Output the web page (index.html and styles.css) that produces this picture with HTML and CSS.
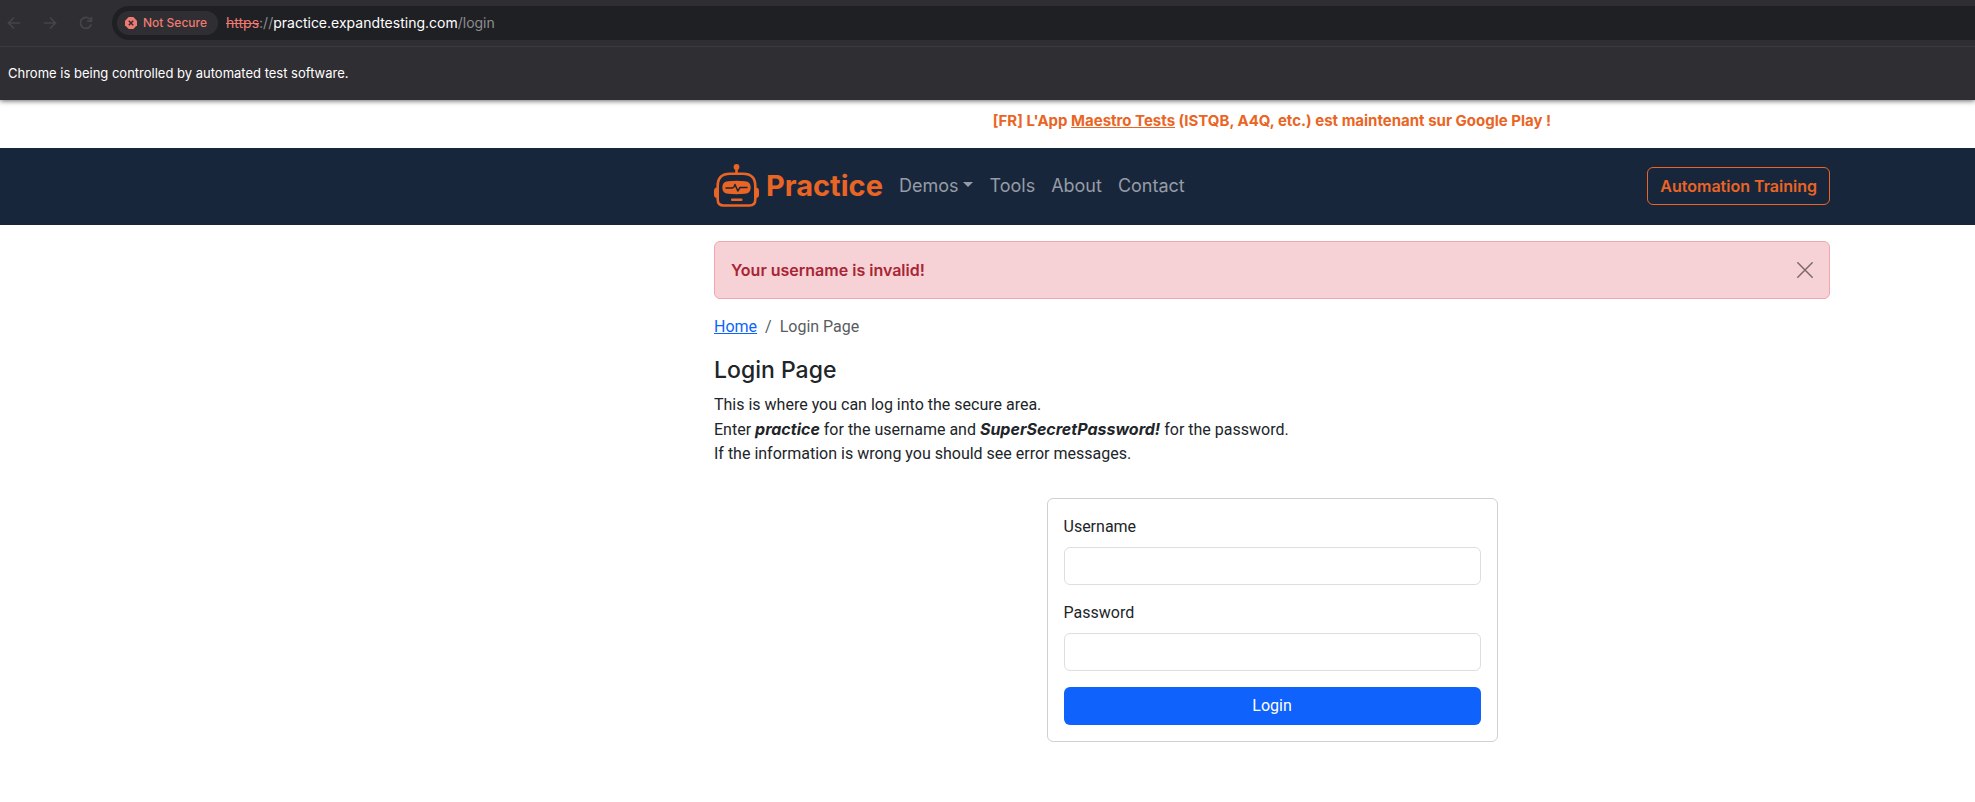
FILE: index.html
```html
<!DOCTYPE html>
<html lang="en">
<head>
<meta charset="utf-8">
<title>Login Page</title>
<link rel="stylesheet" href="styles.css">
</head>
<body>
<div class="browser">
  <div class="toolbar">
    <div class="controls">
      <button class="tool" type="button" aria-label="Back"><svg viewBox="0 0 16 16"><path d="M14 8H2.500M8 2.500 2.500 8 8 13.500"/></svg></button>
      <button class="tool" type="button" aria-label="Forward"><svg viewBox="0 0 16 16"><path d="M2 8h11.500M8 2.500 13.500 8 8 13.500"/></svg></button>
      <button class="tool" type="button" aria-label="Reload"><svg viewBox="0 0 16 16"><path d="M13.300 9.200A5.500 5.500 0 1 1 12.300 4.500L13.500 6M13.500 2v4.200H9.300"/></svg></button>
    </div>
    <div class="address">
      <button class="chip" type="button"><svg viewBox="0 0 12 12"><path class="chip-shape" d="M3.700 0h4.600L12 3.700v4.600L8.300 12H3.700L0 8.300V3.700z"/><path class="chip-cross" d="M3.800 3.800l4.400 4.400M8.200 3.800 3.800 8.200"/></svg>Not Secure</button>
      <span class="url"><s>https</s>://<b>practice.expandtesting.com</b>/login</span>
    </div>
  </div>
  <div class="infobar">Chrome is being controlled by automated test software.</div>
</div>
<div class="row banner"><p class="col">[FR] L'App <a href="#">Maestro Tests</a> (ISTQB, A4Q, etc.) est maintenant sur Google Play !</p></div>
<header class="row header">
  <nav class="col nav">
    <a class="brand" href="#">
      <svg viewBox="0 0 45 44"><g fill="none" stroke="#ea6524" stroke-width="2.600"><path d="M22.500 4v6"/><path d="M16 9.700h13Q41.300 9.700 41.300 22v13.500q0 6-6 6H9.700q-6 0-6-6V22Q3.700 9.700 16 9.700z"/></g><g fill="#ea6524"><circle cx="22.500" cy="3" r="2.900"/><path d="M3 23.500Q0 23.500 0 27v3.500Q0 34 3 34zM42 23.500q3 0 3 3.500v3.500q0 3.500-3 3.500zM14 17.200q8.500-.8 17 0 5.700.6 5.700 6.300T31 29.800q-8.500.8-17 0-5.700-.6-5.700-6.300T14 17.200z"/><rect x="17" y="34.500" width="11.500" height="2.600" rx="1"/></g><path d="M12 24h6.500l1.500-1 1-2.500 2.800 6.500 2.200-3.500h7" fill="none" stroke="#18263c" stroke-width="1.500" stroke-linejoin="round" stroke-linecap="round"/></svg>
      Practice</a>
    <div class="links">
      <a class="drop" href="#">Demos</a>
      <a href="#">Tools</a>
      <a href="#">About</a>
      <a href="#">Contact</a>
    </div>
    <a class="training" href="#">Automation Training</a>
  </nav>
</header>
<main class="row">
  <div class="col">
    <div class="alert" role="alert"><b>Your username is invalid!</b><button class="close" type="button" aria-label="Close"><svg viewBox="0 0 16 16"><path d="M.800.800l14.400 14.400M15.200.800.800 15.200"/></svg></button></div>
    <nav class="crumbs" aria-label="Breadcrumb"><a href="#">Home</a><span>/</span><span>Login Page</span></nav>
    <h1>Login Page</h1>
    <p class="intro">This is where you can log into the secure area.<br>Enter <b><i>practice</i></b> for the username and <b><i>SuperSecretPassword!</i></b> for the password.<br>If the information is wrong you should see error messages.</p>
    <form class="card">
      <div class="field"><label for="username">Username</label><input id="username" type="text"></div>
      <div class="field"><label for="password">Password</label><input id="password" type="password"></div>
      <button class="submit" type="button">Login</button>
    </form>
  </div>
</main>
</body>
</html>
```
FILE: styles.css
```css
* { box-sizing: border-box; }
body {
  margin: 0;
  background: #fff;
  color: #212529;
  font: 16px/24px Roboto, "Liberation Sans", sans-serif;
}
h1, p { margin: 0; }
button, input { font: inherit; }
button { cursor: pointer; }
.browser, .banner, .header, h1, b { font-family: Inter, "Liberation Sans", sans-serif; }

.browser {
  background: #2f2e33;
  box-shadow: 0 1px 5px rgba(0, 0, 0, .6);
}
.toolbar {
  display: flex;
  align-items: center;
  gap: 18px;
  padding: 6px 0 6px 6px;
  border-bottom: 1px solid #3b3a3f;
}
.controls { display: flex; gap: 20px; }
.tool { width: 16px; height: 16px; padding: 0; border: 0; background: none; }
.tool svg { display: block; fill: none; stroke: #454549; stroke-width: 1.700; }
.address {
  flex: 1;
  display: flex;
  align-items: center;
  gap: 8px;
  height: 34px;
  padding-left: 5px;
  border-radius: 17px 0 0 17px;
  background: #1f2024;
  font-size: 14px;
}
.chip {
  display: flex;
  align-items: center;
  gap: 6px;
  height: 24px;
  padding: 0 11px 0 8px;
  border: 0;
  border-radius: 12px;
  background: #2f2e33;
  color: #ee7b72;
  font-size: 12px;
  font-weight: 500;
}
.chip svg { width: 12px; height: 12px; }
.chip-shape { fill: #ee7b72; }
.chip-cross { stroke: #2f2e33; stroke-width: 1.500; }
.url { color: #8d8d91; }
.url s { color: #ee7b72; }
.url b { color: #fff; font-weight: 400; }
.infobar {
  padding: 14px 8px 15px;
  color: #fff;
  font-size: 13px;
}

/* Page column with uneven free space on its two sides */
.row { display: grid; grid-template-columns: 702fr minmax(auto, 1140px) 133fr; }
.col { grid-column: 2; padding: 0 12px; }
.banner {
  padding: 9px 0 15px;
  color: #ea6524;
  font-size: 15px;
  font-weight: 700;
  text-align: center;
}
.banner a { color: inherit; }
.header { padding: 16px 0 17px; background: #18263c; }
.nav { display: flex; align-items: center; }
.nav a { text-decoration: none; }
.brand {
  display: flex;
  align-items: center;
  gap: 7px;
  margin-right: 16px;
  color: #ea6524;
  font-size: 29px;
  font-weight: 700;
}
.brand svg { width: 45px; height: 44px; }
.links { display: flex; gap: 16px; font-size: 18px; }
.links a { color: #969ca5; }
.drop::after {
  content: "";
  display: inline-block;
  margin-left: 5px;
  vertical-align: 5px;
  border: 5px solid transparent;
  border-top-color: currentColor;
  border-bottom: 0;
}
.training {
  margin-left: auto;
  padding: 6px 12px;
  border: 1px solid #ea6524;
  border-radius: 6px;
  color: #ea6524;
  font-weight: 600;
}
main { padding: 16px 0; }
.alert {
  display: flex;
  align-items: center;
  justify-content: space-between;
  padding: 16px;
  border: 1px solid #f1a6ae;
  border-radius: 6px;
  background: #f6d2d6;
  color: #a92434;
}
.alert b { font-weight: 600; }
.close { width: 16px; height: 16px; padding: 0; border: 0; background: none; }
.close svg { display: block; fill: none; stroke: #7b696b; stroke-width: 1.500; stroke-linecap: round; }
.crumbs { display: flex; gap: 8px; margin: 16px 0; color: #595c5f; }
.crumbs a { color: #0d63fd; }
h1 { margin-bottom: 8px; font-size: 23px; line-height: 30px; font-weight: 500; }
.card {
  display: grid;
  gap: 16px;
  width: 451px;
  max-width: 100%;
  margin: 32px auto 0;
  padding: 16px;
  border: 1px solid #d0d1d3;
  border-radius: 6px;
}
.field { display: grid; gap: 8px; }
.field input {
  width: 100%;
  height: 38px;
  padding: 6px 12px;
  border: 1px solid #dadfe4;
  border-radius: 6px;
  background: #fff;
}
.submit {
  height: 38px;
  border: 0;
  border-radius: 6px;
  background: #0f62fb;
  color: #fff;
}
```
